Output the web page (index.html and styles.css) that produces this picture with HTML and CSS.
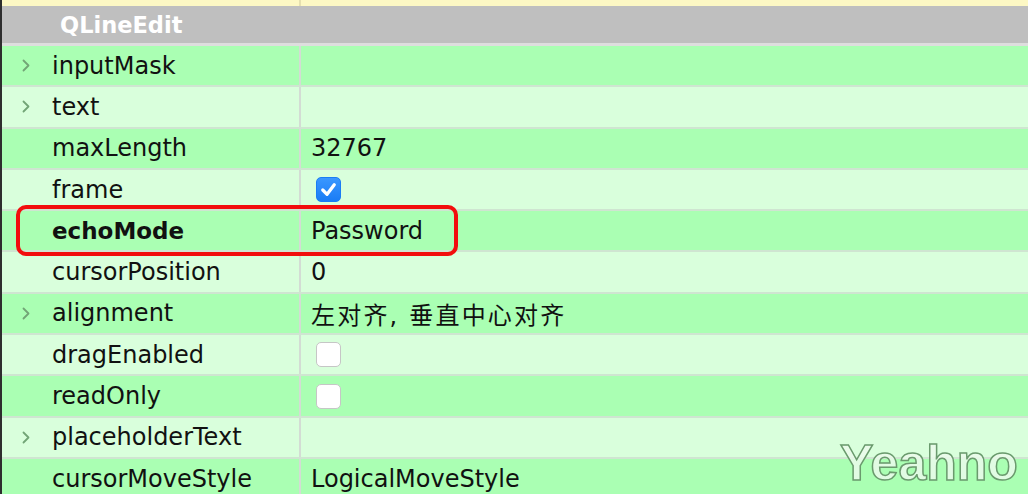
FILE: index.html
```html
<!DOCTYPE html>
<html>
<head>
<meta charset="utf-8">
<link rel="stylesheet" href="styles.css">
</head>
<body>
<div class="editor">
  <div class="topstrip"><div class="tcell"></div><div class="tcell"></div></div>
  <div class="header"><span class="htitle">QLineEdit</span></div>
  <div class="rows">
    <div class="row dark"><div class="label"><svg class="chev" viewBox="0 0 8 13"><polyline points="1.5,1.5 6.5,6.5 1.5,11.5"/></svg>inputMask</div><div class="value"></div></div>
    <div class="row light"><div class="label"><svg class="chev" viewBox="0 0 8 13"><polyline points="1.5,1.5 6.5,6.5 1.5,11.5"/></svg>text</div><div class="value"></div></div>
    <div class="row dark"><div class="label">maxLength</div><div class="value">32767</div></div>
    <div class="row light"><div class="label">frame</div><div class="value"><span class="cb checked"><svg viewBox="0 0 24 24"><polyline points="6,12.5 10.5,17 18,7"/></svg></span></div></div>
    <div class="row dark"><div class="label bold">echoMode</div><div class="value">Password</div></div>
    <div class="row light"><div class="label">cursorPosition</div><div class="value">0</div></div>
    <div class="row dark"><div class="label"><svg class="chev" viewBox="0 0 8 13"><polyline points="1.5,1.5 6.5,6.5 1.5,11.5"/></svg>alignment</div><div class="value cjk">左对齐, 垂直中心对齐</div></div>
    <div class="row light"><div class="label">dragEnabled</div><div class="value"><span class="cb"></span></div></div>
    <div class="row dark"><div class="label">readOnly</div><div class="value"><span class="cb"></span></div></div>
    <div class="row light"><div class="label"><svg class="chev" viewBox="0 0 8 13"><polyline points="1.5,1.5 6.5,6.5 1.5,11.5"/></svg>placeholderText</div><div class="value"></div></div>
    <div class="row dark"><div class="label">cursorMoveStyle</div><div class="value">LogicalMoveStyle</div></div>
  </div>
  <div class="highlight"></div>
  <div class="watermark">Yeahno</div>
</div>
</body>
</html>
```
FILE: styles.css
```css
html, body {
  margin: 0;
  padding: 0;
  width: 1028px;
  height: 494px;
  overflow: hidden;
  background: #d9ffdc;
}
.editor {
  position: relative;
  width: 1026px;
  height: 494px;
  border-left: 2px solid #2e2e2e;
  font-family: "DejaVu Sans", "Noto Sans CJK SC", sans-serif;
  color: #111;
}
.topstrip {
  display: grid;
  grid-template-columns: 299px 1fr;
  height: 6px;
  background: #fdf8c4;
}
.topstrip .tcell:first-child {
  border-right: 2px solid #e6e0b0;
}
.header {
  height: 37px;
  background: #bfbfbf;
  border-bottom: 3px solid #dedede;
  display: flex;
  align-items: center;
  padding-left: 58px;
}
.htitle {
  color: #fff;
  font-weight: bold;
  font-size: 22.5px;
}
.rows {
  display: flex;
  flex-direction: column;
}
.row {
  display: grid;
  grid-template-columns: 299px 1fr;
  height: 39.3px;
  border-bottom: 2px solid #cfe5d1;
}
.row.dark { background: #aaffb3; }
.row.light { background: #d9ffdc; }
.label {
  position: relative;
  display: flex;
  align-items: center;
  padding-left: 50px;
  font-size: 24px;
  border-right: 2px solid #d3dcd4;
}
.label.bold {
  font-weight: bold;
  font-size: 23px;
}
.chev {
  position: absolute;
  left: 20px;
  top: 13px;
  width: 8px;
  height: 13px;
  fill: none;
  stroke: #72a576;
  stroke-width: 1.8;
  stroke-linecap: round;
  stroke-linejoin: round;
}
.value {
  display: flex;
  align-items: center;
  padding-left: 10px;
  font-size: 24px;
}
.value.cjk {
  letter-spacing: 2.2px;
}
.cb {
  display: inline-block;
  width: 23px;
  height: 23px;
  margin-left: 5px;
  border-radius: 5px;
  background: #fff;
  border: 1px solid #c6c6c6;
  box-sizing: content-box;
}
.cb.checked {
  background: linear-gradient(#3a97ff, #1a7cf5);
  border-color: #1a7cf5;
}
.cb svg {
  width: 23px;
  height: 23px;
  fill: none;
  stroke: #fff;
  stroke-width: 3.4;
  stroke-linecap: round;
  stroke-linejoin: round;
}
.highlight {
  position: absolute;
  left: 14px;
  top: 205px;
  width: 434px;
  height: 43px;
  border: 4px solid #f20d0d;
  border-radius: 10px;
}
.watermark {
  position: absolute;
  left: 838px;
  top: 434px;
  font-family: "Liberation Sans", Arial, sans-serif;
  font-weight: bold;
  font-size: 50px;
  color: rgba(235, 250, 235, 0.85);
  -webkit-text-stroke: 1.5px #6a9a6d;
}
```
